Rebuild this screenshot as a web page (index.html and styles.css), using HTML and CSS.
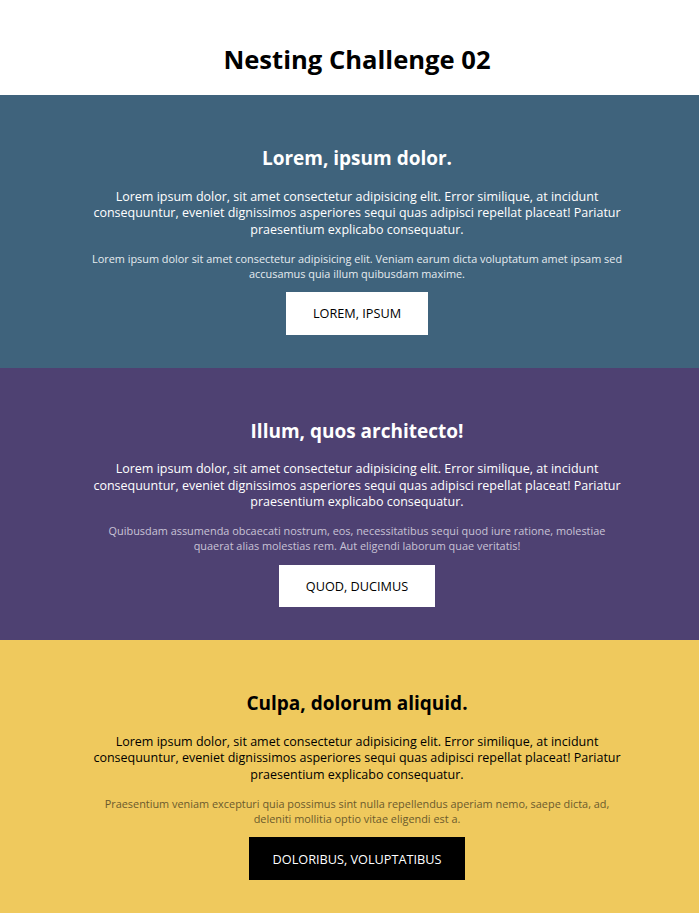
FILE: index.html
```html
<!DOCTYPE html>
<html lang="en">
<head>
<meta charset="utf-8">
<title>Nesting Challenge 02</title>
<link rel="stylesheet" href="styles.css">
</head>
<body>
<header class="page-header">
  <h1 class="page-title">Nesting Challenge 02</h1>
</header>
<main>
  <section class="band band-blue">
    <div class="band-inner">
      <h2 class="band-title">Lorem, ipsum dolor.</h2>
      <p class="band-text">Lorem ipsum dolor, sit amet consectetur adipisicing elit. Error similique, at incidunt consequuntur, eveniet dignissimos asperiores sequi quas adipisci repellat placeat! Pariatur praesentium explicabo consequatur.</p>
      <p class="band-small">Lorem ipsum dolor sit amet consectetur adipisicing elit. Veniam earum dicta voluptatum amet ipsam sed accusamus quia illum quibusdam maxime.</p>
      <a class="band-btn" href="#">LOREM, IPSUM</a>
    </div>
  </section>
  <section class="band band-purple">
    <div class="band-inner">
      <h2 class="band-title">Illum, quos architecto!</h2>
      <p class="band-text">Lorem ipsum dolor, sit amet consectetur adipisicing elit. Error similique, at incidunt consequuntur, eveniet dignissimos asperiores sequi quas adipisci repellat placeat! Pariatur praesentium explicabo consequatur.</p>
      <p class="band-small">Quibusdam assumenda obcaecati nostrum, eos, necessitatibus sequi quod iure ratione, molestiae quaerat alias molestias rem. Aut eligendi laborum quae veritatis!</p>
      <a class="band-btn" href="#">QUOD, DUCIMUS</a>
    </div>
  </section>
  <section class="band band-yellow">
    <div class="band-inner">
      <h2 class="band-title">Culpa, dolorum aliquid.</h2>
      <p class="band-text">Lorem ipsum dolor, sit amet consectetur adipisicing elit. Error similique, at incidunt consequuntur, eveniet dignissimos asperiores sequi quas adipisci repellat placeat! Pariatur praesentium explicabo consequatur.</p>
      <p class="band-small">Praesentium veniam excepturi quia possimus sint nulla repellendus aperiam nemo, saepe dicta, ad, deleniti mollitia optio vitae eligendi est a.</p>
      <a class="band-btn band-btn-dark" href="#">DOLORIBUS, VOLUPTATIBUS</a>
    </div>
  </section>
</main>
</body>
</html>
```
FILE: styles.css
```css
* { box-sizing: border-box; }
html, body { margin: 0; padding: 0; }
body {
  font-family: "Open Sans", "Noto Sans", sans-serif;
  color: #000;
  background: #fff;
}
.page-header {
  height: 95px;
  display: flex;
  align-items: center;
  justify-content: center;
  padding: 24px 0 0 15px;
}
.page-title {
  margin: 0;
  font-size: 25.6px;
  font-weight: 700;
  line-height: 32px;
}
.band {
  height: 272.67px;
  padding: 50px 0 0 15px;
  text-align: center;
}
.band-inner {
  width: 536px;
  margin: 0 auto;
  display: flex;
  flex-direction: column;
  align-items: center;
}
.band-title {
  margin: 0;
  font-size: 19px;
  line-height: 26px;
  font-weight: 700;
}
.band-text {
  margin: 17.5px 0 0;
  font-size: 12.5px;
  line-height: 16.5px;
}
.band-small {
  margin: 12.5px 0 0;
  font-size: 10.9px;
  line-height: 15px;
}
.band-btn {
  margin-top: 11.5px;
  display: inline-flex;
  align-items: center;
  justify-content: center;
  height: 42.5px;
  padding: 0 27px;
  background: #fff;
  color: #000;
  font-size: 12.7px;
  text-decoration: none;
}
.band-btn-dark {
  background: #000;
  color: #fff;
  height: 43px;
  padding: 0 24px;
}
.band-blue { background: #3f637c; color: #fff; }
.band-blue .band-small { color: #e6ecf0; }
.band-purple { background: #4e4172; color: #fff; }
.band-purple .band-small { color: #c9c3d6; }
.band-yellow { background: #efc95d; color: #000; }
.band-yellow .band-small { color: #6b5a2c; }
```
